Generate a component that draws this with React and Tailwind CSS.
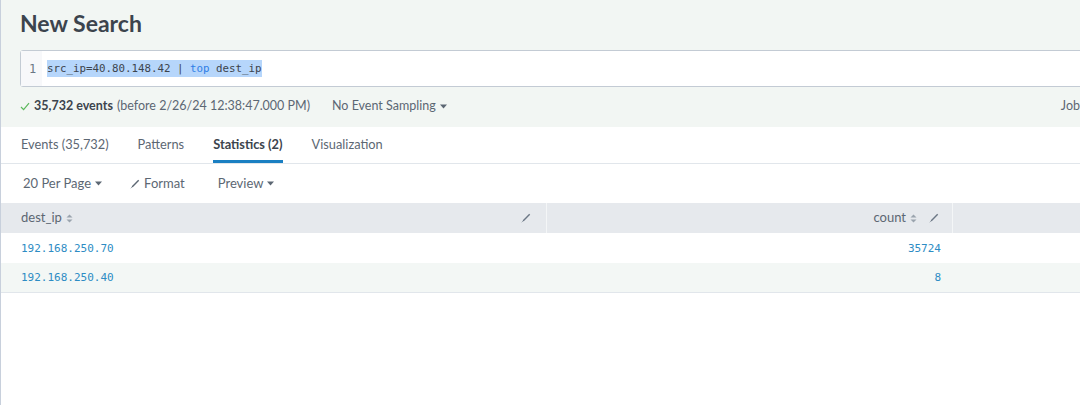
import React from "react";

const Caret = () => (
  <svg width="7" height="5" viewBox="0 0 7 5" className="ml-1 inline-block">
    <path d="M0 0.5h7L3.5 4.5z" fill="currentColor" />
  </svg>
);

const Pencil = ({ className = "" }) => (
  <svg width="10" height="10" viewBox="0 0 10 10" className={className}>
    <path d="M8.2 0.8l1 1L3 8 1.6 8.4 2 7z" fill="currentColor" />
    <path d="M1.6 8.4L0.8 9.2" stroke="currentColor" strokeWidth="0.8" />
  </svg>
);

const Sort = () => (
  <svg width="7" height="9" viewBox="0 0 7 9" className="ml-1 inline-block text-[#9aa4ae]">
    <path d="M3.5 0.5L6.5 3.5H0.5z" fill="currentColor" />
    <path d="M3.5 8.5L6.5 5.5H0.5z" fill="currentColor" />
  </svg>
);

const Check = () => (
  <svg width="10" height="9" viewBox="0 0 10 9" className="mr-1 inline-block">
    <path d="M1 5l2.6 2.6L9 1.2" fill="none" stroke="#5cb85c" strokeWidth="1.2" />
  </svg>
);

const rows = [
  { ip: "192.168.250.70", count: "35724" },
  { ip: "192.168.250.40", count: "8" },
];

function App() {
  return (
    <div
      className="w-[1080px] h-[405px] overflow-hidden bg-white border-l border-[#c8d0dc] text-[#3c444d]"
      style={{ fontFamily: "Lato, 'Open Sans', sans-serif" }}
    >
      {/* header */}
      <div className="bg-[#f2f6f3] h-[127px] pl-[19px] pt-[9px]">
        <h1 className="text-[23px] font-bold leading-[29px] text-[#3c444d]">New Search</h1>
        <div className="mt-[12px] -mr-4 h-[37px] flex items-stretch border border-[#c3cbd4] rounded-[3px] bg-white">
          <div className="w-[21px] bg-[#f7f8fa] flex items-center justify-center text-[12px] text-[#6b7785] pl-[2px]" style={{ fontFamily: "'DejaVu Sans Mono', monospace" }}>
            1
          </div>
          <div className="flex items-center pl-[5px]">
            <span
              className="bg-[#b6d6fb] text-[10.8px] leading-[17px] text-[#3c444d]"
              style={{ fontFamily: "'DejaVu Sans Mono', monospace" }}
            >
              src_ip=40.80.148.42 | <span className="text-[#2f7ee6]">top</span> dest_ip
            </span>
          </div>
        </div>
        <div className="flex items-center h-[38px] text-[12.5px] text-[#5c6773]">
          <Check />
          <span className="font-bold text-[#3c444d]">35,732 events</span>
          <span className="ml-1">(before 2/26/24 12:38:47.000 PM)</span>
          <span className="ml-[22px] flex items-center">
            No Event Sampling
            <Caret />
          </span>
          <span className="ml-auto">Job</span>
        </div>
      </div>

      {/* tabs */}
      <div className="h-[37px] flex items-stretch border-b border-[#e1e6eb] pl-[20px] text-[12.8px] text-[#5c6773]">
        <div className="flex items-center">Events (35,732)</div>
        <div className="flex items-center ml-[29px]">Patterns</div>
        <div className="flex items-center ml-[29px] font-bold text-[#3c444d] border-b-[3px] border-[#1a7fc2] pt-[3px]">
          Statistics (2)
        </div>
        <div className="flex items-center ml-[29px]">Visualization</div>
      </div>

      {/* toolbar */}
      <div className="h-[39px] flex items-center pl-[22px] text-[13px] text-[#5c6773]">
        <span className="flex items-center">
          20 Per Page
          <Caret />
        </span>
        <span className="flex items-center ml-[28px]">
          <Pencil className="mr-[4px] text-[#5c6773]" />
          Format
        </span>
        <span className="flex items-center ml-[33px]">
          Preview
          <Caret />
        </span>
      </div>

      {/* table */}
      <div className="text-[13px]">
        <div className="flex h-[30px] bg-[#e6e9ed]">
          <div className="w-[546px] flex items-center pl-[20px] pr-[15px] border-r border-[#f4f6f7]">
            <span className="flex items-center text-[#5c6773]">
              dest_ip
              <Sort />
            </span>
            <Pencil className="ml-auto text-[#6b7785]" />
          </div>
          <div className="w-[406px] flex items-center justify-end pr-[13px] border-r border-[#f4f6f7]">
            <span className="flex items-center text-[#5c6773]">
              count
              <Sort />
            </span>
            <Pencil className="ml-[12px] text-[#6b7785]" />
          </div>
          <div className="flex-1" />
        </div>
        {rows.map((r, i) => (
          <div
            key={r.ip}
            className={`flex h-[30px] text-[11px] text-[#2d8cc4] ${i % 2 ? "bg-[#f3f7f5] border-b border-[#e1e6eb]" : "bg-white"}`}
            style={{ fontFamily: "'DejaVu Sans Mono', monospace" }}
          >
            <div className="w-[546px] flex items-center pl-[20px] pt-[2px]">{r.ip}</div>
            <div className="w-[406px] flex items-center justify-end pr-[12px] pt-[2px]">{r.count}</div>
            <div className="flex-1" />
          </div>
        ))}
      </div>
    </div>
  );
}

export default App;
